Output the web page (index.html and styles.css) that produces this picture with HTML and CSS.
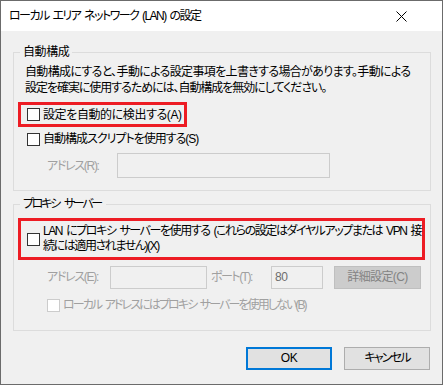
FILE: index.html
```html
<!DOCTYPE html>
<html lang="ja">
<head>
<meta charset="utf-8">
<title>ローカル エリア ネットワーク (LAN) の設定</title>
<link rel="stylesheet" href="styles.css">
</head>
<body>
<div class="window">
  <div class="titlebar">
    <span class="title">ローカル エリア ネットワーク (LAN) の設定</span>
    <svg class="close" width="11" height="11" viewBox="0 0 11 11"><path d="M0.5 0.5 L10.5 10.5 M10.5 0.5 L0.5 10.5" stroke="#000" stroke-width="1" fill="none"/></svg>
  </div>
  <div class="content">
    <fieldset class="group g1">
      <legend>自動構成</legend>
      <p class="desc"><span class="l1">自動構成にすると、手動による設定事項を上書きする場合があります。手動による</span><span class="l2">設定を確実に使用するためには、自動構成を無効にしてください。</span></p>
      <div class="check hl hl1"><span class="box"></span><span>設定を自動的に検出する(A)</span></div>
      <div class="check plain"><span class="box"></span><span class="t-cb2">自動構成スクリプトを使用する(S)</span></div>
      <div class="field-row r1">
        <span class="lbl dis lbl-r">アドレス(R):</span>
        <span class="input in-r"></span>
      </div>
    </fieldset>
    <fieldset class="group g2">
      <legend class="lg2">プロキシ サーバー</legend>
      <div class="check hl hl2"><span class="box"></span><span class="multi">LAN にプロキシ サーバーを使用する (これらの設定はダイヤルアップまたは VPN 接<br>続には適用されません)(X)</span></div>
      <div class="field-row r2">
        <span class="lbl dis lbl-e">アドレス(E):</span>
        <span class="input in-e"></span>
        <span class="lbl dis lbl-t">ポート(T):</span>
        <span class="input in-t">80</span>
        <span class="btn-dis">詳細設定(C)</span>
      </div>
      <div class="check disabled"><span class="box"></span><span class="t-cb4">ローカル アドレスにはプロキシ サーバーを使用しない(B)</span></div>
    </fieldset>
    <div class="buttons">
      <span class="btn default">OK</span>
      <span class="btn cancel">キャンセル</span>
    </div>
  </div>
</div>
</body>
</html>
```

FILE: styles.css
```css
html, body {
  margin: 0;
  padding: 0;
  background: #ffffff;
}
body {
  width: 443px;
  height: 386px;
  overflow: hidden;
  font-family: "Liberation Sans", "Noto Sans CJK JP", sans-serif;
  font-size: 12px;
  font-feature-settings: "palt";
  letter-spacing: -0.4px;
  word-spacing: 2px;
  color: #000;
}
.window {
  box-sizing: border-box;
  width: 443px;
  height: 385px;
  border: 1px solid #6b6b6b;
  display: flex;
  flex-direction: column;
  background: #f0f0f0;
}
.titlebar {
  height: 30px;
  background: #ffffff;
  display: flex;
  align-items: center;
  padding-left: 8px;
  padding-right: 35px;
}
.title {
  flex: 1;
  line-height: 16px;
  letter-spacing: -1.55px;
  white-space: nowrap;
}
.close {
  display: block;
  margin-top: 1px;
}
.content {
  flex: 1;
  padding: 13px 0 0 12px;
  display: flex;
  flex-direction: column;
}
.group {
  box-sizing: border-box;
  width: 418px;
  min-width: 0;
  margin: 0;
  padding: 0;
  border: 1px solid #dcdcdc;
}
.group legend {
  margin-left: 6px;
  padding: 0 3px;
  line-height: 16px;
  font-size: 12px;
}
.group legend.lg2 {
  letter-spacing: -2.3px;
  word-spacing: 4px;
  padding-right: 5px;
}
.g1 {
  padding-bottom: 12px;
}
.g2 {
  margin-top: 5px;
  padding-bottom: 17px;
}
.desc {
  margin: 4px 0 0 11px;
  line-height: 16px;
  white-space: nowrap;
}
.desc .l1 {
  display: block;
  letter-spacing: -0.65px;
}
.desc .l2 {
  display: block;
  letter-spacing: -1.05px;
}
.check {
  display: flex;
  align-items: center;
  line-height: 16px;
  white-space: nowrap;
}
.box {
  box-sizing: border-box;
  width: 13px;
  height: 13px;
  border: 1px solid #333333;
  background: #ffffff;
  margin-right: 3px;
  flex: none;
}
.hl {
  box-sizing: border-box;
  border: 3px solid #ed1c24;
  margin-left: 4px;
  padding-left: 6px;
}
.hl1 {
  width: 169px;
  height: 25px;
  margin-top: 6px;
}
.hl2 {
  width: 407px;
  height: 42px;
  margin-top: 6px;
}
.multi {
  line-height: 15px;
  letter-spacing: -1.42px;
}
.t-cb2 {
  letter-spacing: -1px;
}
.t-cb4 {
  letter-spacing: -1.9px;
}
.plain {
  margin: 4px 0 0 13px;
}
.disabled {
  margin: 8px 0 0 33px;
  color: #a0a0a0;
}
.disabled .box {
  border-color: #cccccc;
}
.field-row {
  display: flex;
  align-items: center;
  white-space: nowrap;
}
.r1 {
  margin: 6px 0 0 33px;
  height: 25px;
}
.r2 {
  margin: 5px 0 0 33px;
  height: 24px;
}
.lbl {
  line-height: 16px;
}
.dis {
  color: #a0a0a0;
}
.lbl-r { width: 70px; letter-spacing: -1.3px; }
.lbl-e { width: 63px; letter-spacing: -1.3px; }
.lbl-t { width: 60px; margin-left: 4px; letter-spacing: -1.5px; }
.input {
  box-sizing: border-box;
  height: 23px;
  border: 1px solid #cccccc;
  background: #f0f0f0;
  color: #6d6d6d;
  line-height: 21px;
  padding-left: 3px;
}
.in-r {
  width: 213px;
  height: 25px;
}
.in-e { width: 97px; }
.in-t { width: 52px; }
.btn-dis {
  box-sizing: border-box;
  width: 87px;
  height: 23px;
  margin-left: 11px;
  margin-top: 1px;
  border: 1px solid #bfbfbf;
  background: #cccccc;
  color: #838383;
  text-align: center;
  line-height: 21px;
  letter-spacing: -0.6px;
}
.buttons {
  display: flex;
  justify-content: flex-end;
  gap: 12px;
  margin-top: 16px;
  padding-right: 12px;
}
.btn {
  box-sizing: border-box;
  width: 86px;
  height: 23px;
  border: 1px solid #adadad;
  background: #e1e1e1;
  text-align: center;
  line-height: 21px;
}
.btn.cancel {
  letter-spacing: -1.8px;
}
.btn.default {
  border: 2px solid #0078d7;
  line-height: 19px;
}
```
